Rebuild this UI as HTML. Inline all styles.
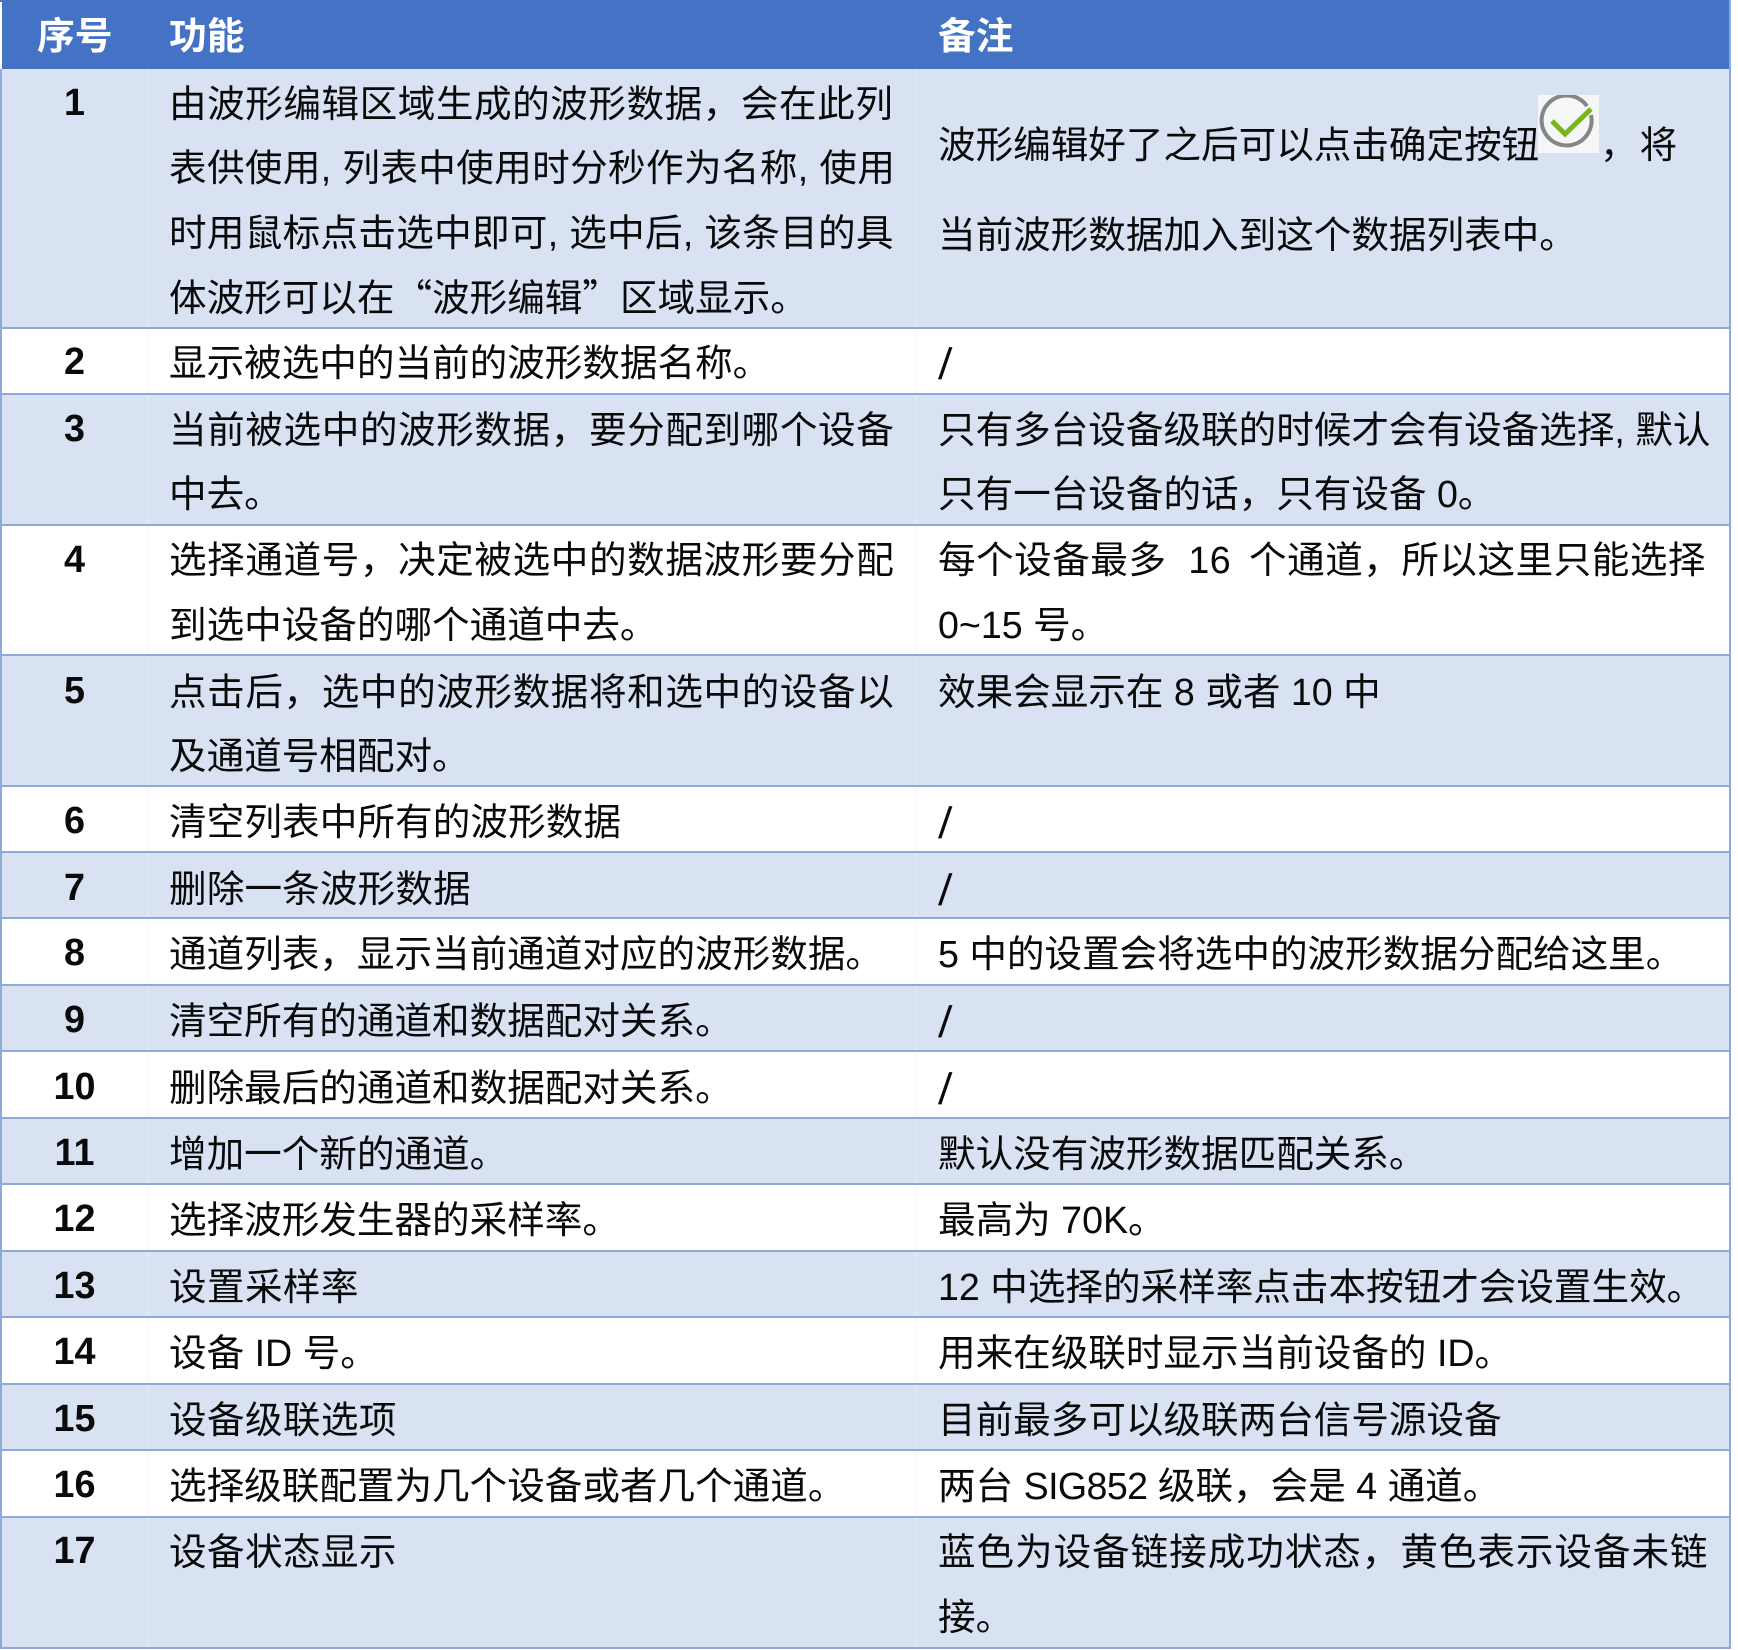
<!DOCTYPE html>
<html lang="zh-CN"><head><meta charset="utf-8"><title>功能说明表</title>
<style>
html,body{margin:0;padding:0;background:#fff}
#p{position:relative;width:1738px;height:1650px;overflow:hidden;background:#fff;font-family:"Liberation Sans","Noto Sans CJK SC",sans-serif;font-size:37.6px;color:#0a0a0a}
.b{position:absolute;left:2px;width:1727px;background:#D9E2F3}
.h{position:absolute;left:0;width:1731px;height:2px;background:#8EAADB}
.v{position:absolute;width:2px;background:#8EAADB}
.c{position:absolute;width:2px;background:#EDF1F9;top:69px;height:1579px;opacity:.4}
.l,.n,.t,.s{position:absolute;height:60px;line-height:60px;white-space:pre}
.n{left:2px;width:145px;text-align:center;font-weight:700;font-size:37.75px}
.t{top:6px;color:#fff;font-weight:700;font-size:37.75px}
.s{left:939px;font-size:44px;transform:skewX(-4deg)}
.a{left:169px}.d{left:938px}
.q{font-family:"Noto Sans CJK SC",sans-serif}
</style></head><body><div id="p">
<div class="b" style="top:1px;height:68px;background:#4472C4"></div>
<div class="b" style="top:69px;height:259px"></div>
<div class="b" style="top:394px;height:131px"></div>
<div class="b" style="top:655px;height:131px"></div>
<div class="b" style="top:852px;height:66px"></div>
<div class="b" style="top:985px;height:66px"></div>
<div class="b" style="top:1118px;height:66px"></div>
<div class="b" style="top:1251px;height:66px"></div>
<div class="b" style="top:1384px;height:66px"></div>
<div class="b" style="top:1517px;height:131px"></div>
<div class="c" style="left:147px"></div><div class="c" style="left:915px"></div>
<div class="h" style="top:0;background:#4472C4"></div>
<div class="h" style="top:327px"></div><div class="h" style="top:393px"></div><div class="h" style="top:524px"></div><div class="h" style="top:654px"></div><div class="h" style="top:785px"></div><div class="h" style="top:851px"></div><div class="h" style="top:917px"></div><div class="h" style="top:984px"></div><div class="h" style="top:1050px"></div><div class="h" style="top:1117px"></div><div class="h" style="top:1183px"></div><div class="h" style="top:1250px"></div><div class="h" style="top:1316px"></div><div class="h" style="top:1383px"></div><div class="h" style="top:1449px"></div><div class="h" style="top:1516px"></div><div class="h" style="top:1647px"></div>
<div class="v" style="left:0;top:69px;height:1580px"></div><div class="v" style="left:1729px;top:0;height:1649px"></div>

<div class="t" style="left:37px">序号</div><div class="t" style="left:169px">功能</div><div class="t" style="left:938px">备注</div>

<div class="n" style="top:72px">1</div>
<div class="l a" style="top:74px;letter-spacing:.55px">由波形编辑区域生成的波形数据，会在此列</div>
<div class="l a" style="top:138px;letter-spacing:.37px">表供使用, 列表中使用时分秒作为名称, 使用</div>
<div class="l a" style="top:203px;letter-spacing:.3px">时用鼠标点击选中即可, 选中后, 该条目的具</div>
<div class="l a" style="top:265px">体波形可以在<span class="q">“</span>波形编辑<span class="q">”</span>区域显示。</div>
<div class="l d" style="top:115px">波形编辑好了之后可以点击确定按钮</div>
<svg style="position:absolute;left:1538px;top:95px" width="61" height="58" viewBox="0 0 61 58"><rect width="61" height="58" fill="#F4F6F8"/><path d="M49 11A25 25 0 1 0 53 20" fill="none" stroke="#868686" stroke-width="4"/><path d="M14 26L27 39L53 14" fill="none" stroke="#7AB51D" stroke-width="5"/></svg>
<div class="l" style="left:1600px;top:115px;letter-spacing:2px">，将</div>
<div class="l d" style="top:205px">当前波形数据加入到这个数据列表中。</div>

<div class="n" style="top:331px">2</div>
<div class="l a" style="top:333px">显示被选中的当前的波形数据名称。</div>
<div class="s" style="top:335px">/</div>

<div class="n" style="top:398px">3</div>
<div class="l a" style="top:400px;letter-spacing:.6px">当前被选中的波形数据，要分配到哪个设备</div>
<div class="l a" style="top:464px">中去。</div>
<div class="l d" style="top:400px">只有多台设备级联的时候才会有设备选择, 默认</div>
<div class="l d" style="top:464px">只有一台设备的话，只有设备 0。</div>

<div class="n" style="top:529px">4</div>
<div class="l a" style="top:530px;letter-spacing:.6px">选择通道号，决定被选中的数据波形要分配</div>
<div class="l a" style="top:595px">到选中设备的哪个通道中去。</div>
<div class="l d" style="top:530px;letter-spacing:.5px">每个设备最多  16<span style="letter-spacing:-1.5px">  </span>个通道，所以这里只能选择</div>
<div class="l d" style="top:595px">0~15 号。</div>

<div class="n" style="top:660px">5</div>
<div class="l a" style="top:662px;letter-spacing:.6px">点击后，选中的波形数据将和选中的设备以</div>
<div class="l a" style="top:726px">及通道号相配对。</div>
<div class="l d" style="top:662px">效果会显示在 8 或者 10 中</div>

<div class="n" style="top:790px">6</div>
<div class="l a" style="top:792px;letter-spacing:.1px">清空列表中所有的波形数据</div>
<div class="s" style="top:794px">/</div>

<div class="n" style="top:857px">7</div>
<div class="l a" style="top:859px;letter-spacing:.15px">删除一条波形数据</div>
<div class="s" style="top:861px">/</div>

<div class="n" style="top:922px">8</div>
<div class="l a" style="top:924px">通道列表，显示当前通道对应的波形数据。</div>
<div class="l d" style="top:924px">5 中的设置会将选中的波形数据分配给这里。</div>

<div class="n" style="top:989px">9</div>
<div class="l a" style="top:991px">清空所有的通道和数据配对关系。</div>
<div class="s" style="top:993px">/</div>

<div class="n" style="top:1056px">10</div>
<div class="l a" style="top:1058px">删除最后的通道和数据配对关系。</div>
<div class="s" style="top:1060px">/</div>

<div class="n" style="top:1122px">11</div>
<div class="l a" style="top:1124px">增加一个新的通道。</div>
<div class="l d" style="top:1124px">默认没有波形数据匹配关系。</div>

<div class="n" style="top:1188px">12</div>
<div class="l a" style="top:1190px">选择波形发生器的采样率。</div>
<div class="l d" style="top:1190px">最高为 70K。</div>

<div class="n" style="top:1255px">13</div>
<div class="l a" style="top:1257px;letter-spacing:.4px">设置采样率</div>
<div class="l d" style="top:1257px">12 中选择的采样率点击本按钮才会设置生效。</div>

<div class="n" style="top:1321px">14</div>
<div class="l a" style="top:1323px">设备 ID 号。</div>
<div class="l d" style="top:1323px">用来在级联时显示当前设备的 ID。</div>

<div class="n" style="top:1388px">15</div>
<div class="l a" style="top:1390px;letter-spacing:.4px">设备级联选项</div>
<div class="l d" style="top:1390px">目前最多可以级联两台信号源设备</div>

<div class="n" style="top:1454px">16</div>
<div class="l a" style="top:1456px">选择级联配置为几个设备或者几个通道。</div>
<div class="l d" style="top:1456px">两台 <span style="letter-spacing:-.6px">SIG852</span> 级联，会是 4 通道。</div>

<div class="n" style="top:1520px">17</div>
<div class="l a" style="top:1522px;letter-spacing:.4px">设备状态显示</div>
<div class="l d" style="top:1522px;letter-spacing:.95px">蓝色为设备链接成功状态，黄色表示设备未链</div>
<div class="l d" style="top:1587px">接。</div>
</div></body></html>
